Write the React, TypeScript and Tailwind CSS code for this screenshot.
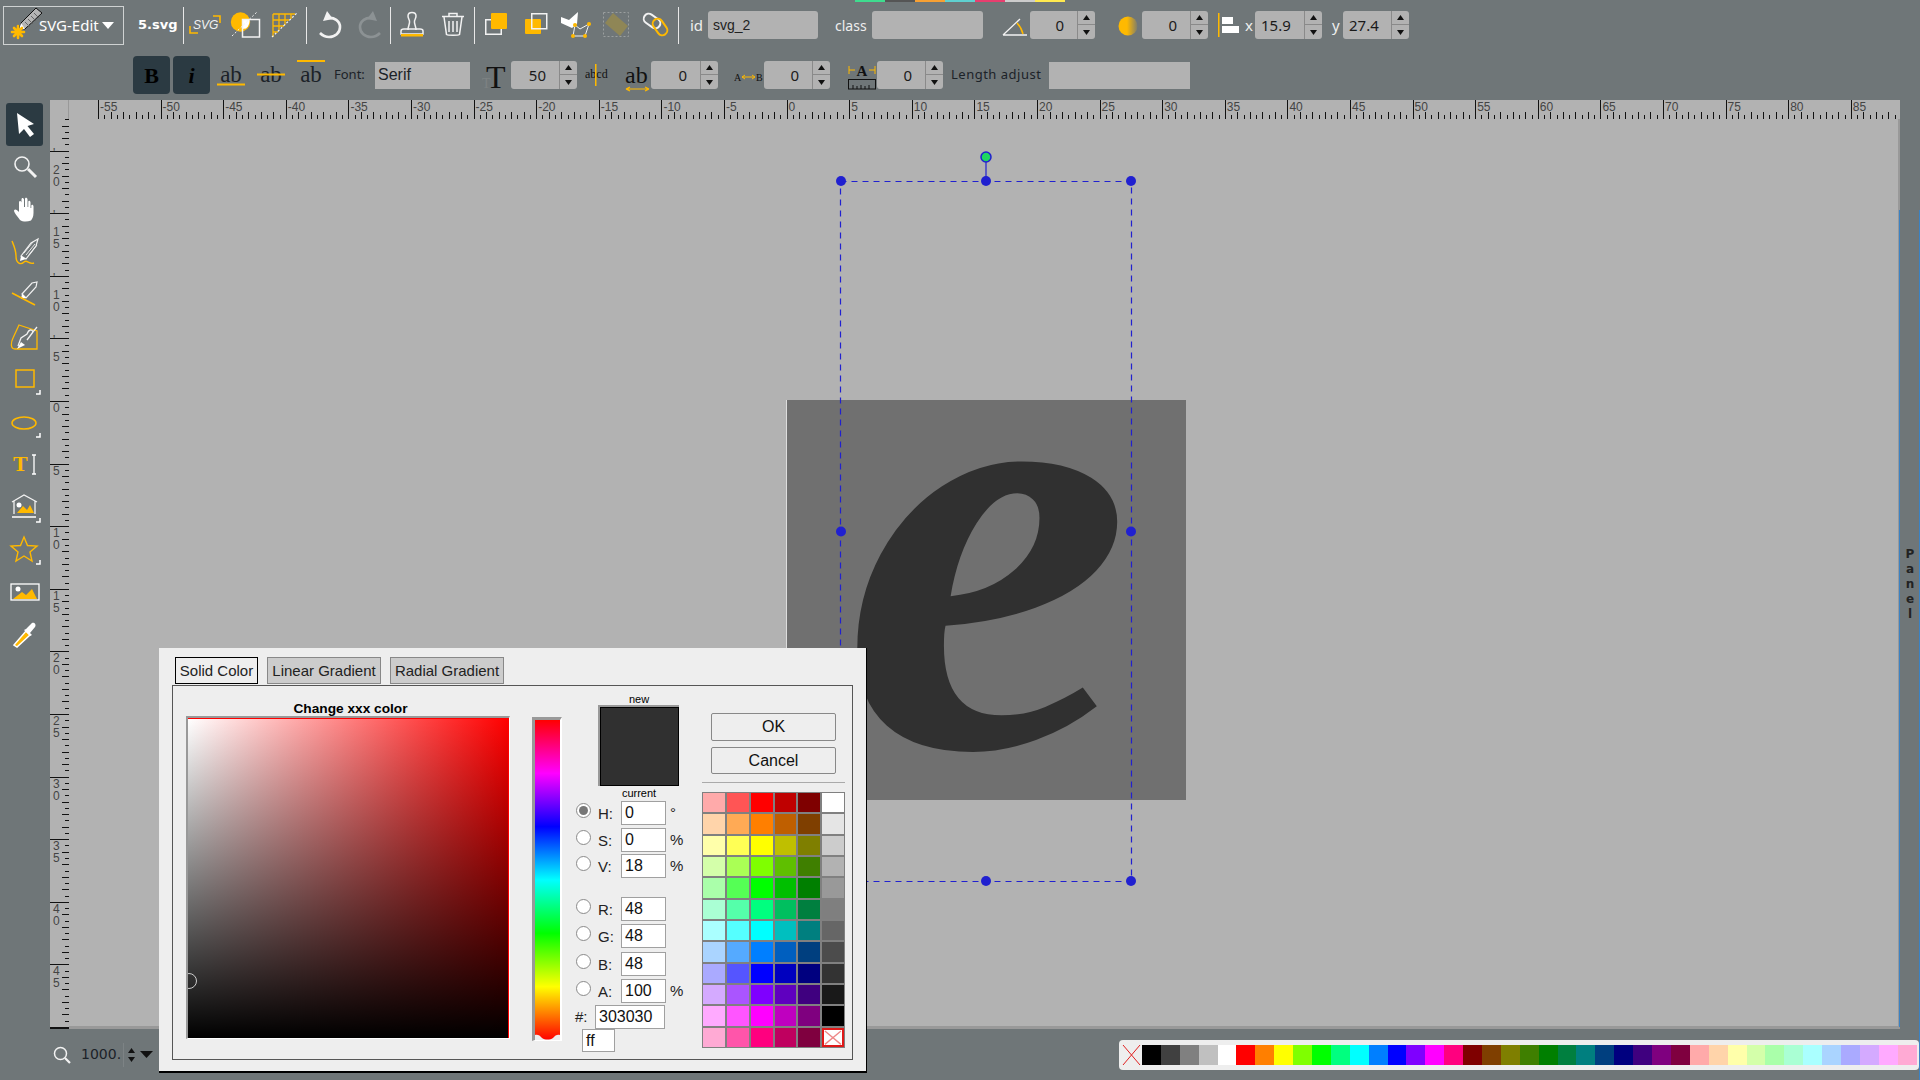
import React from "react"

const ORANGE = "#ffb900"
const WHITE = "#f2f2f2"

const topStrip = ["#3fdc8f", "#555555", "#f7a033", "#5fd0d0", "#e83e6f", "#cccccc", "#ffe94f"]

const swatches = [
  "#000000", "#404040", "#808080", "#c0c0c0", "#ffffff", "#ff0000", "#ff7f00", "#ffff00", "#7fff00", "#00ff00", "#00ff7f",
  "#00ffff", "#007fff", "#0000ff", "#7f00ff", "#ff00ff", "#ff007f", "#7f0000", "#7f3f00", "#7f7f00", "#3f7f00", "#007f00",
  "#007f3f", "#007f7f", "#003f7f", "#00007f", "#3f007f", "#7f007f", "#7f003f", "#ffaaaa", "#ffd4aa", "#ffffaa", "#d4ffaa",
  "#aaffaa", "#aaffd4", "#aaffff", "#aad4ff", "#aaaaff", "#d4aaff", "#ffaaff", "#ffaad4",
]

const quickColors = [
  "#ffaaaa", "#ff5555", "#ff0000", "#bf0000", "#7f0000", "#ffffff",
  "#ffd4aa", "#ffaa55", "#ff7f00", "#bf5f00", "#7f3f00", "#e5e5e5",
  "#ffffaa", "#ffff55", "#ffff00", "#bfbf00", "#7f7f00", "#cccccc",
  "#d4ffaa", "#aaff55", "#7fff00", "#5fbf00", "#3f7f00", "#b2b2b2",
  "#aaffaa", "#55ff55", "#00ff00", "#00bf00", "#007f00", "#999999",
  "#aaffd4", "#55ffaa", "#00ff7f", "#00bf5f", "#007f3f", "#7f7f7f",
  "#aaffff", "#55ffff", "#00ffff", "#00bfbf", "#007f7f", "#666666",
  "#aad4ff", "#55aaff", "#007fff", "#005fbf", "#003f7f", "#4c4c4c",
  "#aaaaff", "#5555ff", "#0000ff", "#0000bf", "#00007f", "#333333",
  "#d4aaff", "#aa55ff", "#7f00ff", "#5f00bf", "#3f007f", "#191919",
  "#ffaaff", "#ff55ff", "#ff00ff", "#bf00bf", "#7f007f", "#000000",
  "#ffaad4", "#ff55aa", "#ff007f", "#bf005f", "#7f003f",
]

function Spinner({ value, className, left }: { value: string; className: string; left?: boolean }) {
  return (
    <div className={`flex h-[28px] shrink-0 overflow-hidden rounded-[3px] bg-[#b2b2b2] text-[15px] text-[#1a1a1a] ${className}`}>
      <div className={`flex flex-1 items-center ${left ? "pl-[6px]" : "justify-end pr-[13px]"}`}>{value}</div>
      <div className="flex w-[18px] flex-col border-l border-[#8a8a8a]">
        <div className="flex h-[14px] items-center justify-center border-b border-[#8a8a8a]">
          <svg width="7" height="5" viewBox="0 0 7 5"><path d="M3.5 0 7 5H0Z" fill="#111" /></svg>
        </div>
        <div className="flex flex-1 items-center justify-center">
          <svg width="7" height="5" viewBox="0 0 7 5"><path d="M3.5 5 7 0H0Z" fill="#111" /></svg>
        </div>
      </div>
    </div>
  )
}

function Sep({ className }: { className: string }) {
  return <div className={`h-[37px] w-px shrink-0 bg-[#e8e8e8] ${className}`} />
}

function LogoIcon() {
  return (
    <svg width="36" height="37" viewBox="0 0 36 37" className="shrink-0">
      <path d="M29 1 35 6 18 22 12 23 14 16Z" fill="#b5b5b5" stroke="#111" strokeWidth="1" />
      <path d="M18 15 23 20M21 12 26 17M24 9 29 14M27 6 32 11" stroke="#666" strokeWidth="1" />
      <path d="M14 16 18 22 12 23Z" fill="#fff" />
      <g stroke={ORANGE} strokeWidth="2.6" strokeLinecap="round">
        <path d="M11 19V31M5 25H17M7 21 15 29M15 21 7 29" />
      </g>
    </svg>
  )
}

function SvgIcon({ className }: { className: string }) {
  return (
    <svg width="32" height="32" viewBox="0 0 32 32" className={className}>
      <text x="4" y="20" fontFamily="'Liberation Sans', sans-serif" fontStyle="italic" fontSize="12" fill={WHITE}>SVG</text>
      <path d="M24 7H31V14" fill="none" stroke={ORANGE} strokeWidth="1.6" />
      <path d="M1 17V24H9" fill="none" stroke={ORANGE} strokeWidth="1.6" />
    </svg>
  )
}

function ShapeIcon({ className }: { className: string }) {
  return (
    <svg width="32" height="32" viewBox="0 0 32 32" className={className}>
      <circle cx="11.5" cy="13" r="9.7" fill={ORANGE} />
      <path d="M13 10H20.5C21 13 20 17 17 19.5L13 20Z" fill="#fff" />
      <rect x="13.5" y="10.5" width="17" height="17.5" fill="none" stroke={WHITE} strokeWidth="1.5" />
      <path d="M3 27 28 3" stroke={WHITE} strokeWidth="1" strokeDasharray="2 2" />
    </svg>
  )
}

function GridIcon({ className }: { className: string }) {
  return (
    <svg width="32" height="32" viewBox="0 0 32 32" className={className}>
      <path d="M4 5H26M4 11H20M4 17H15M4 23H9M4 5V28M10 5V22M16 5V16M22 5V10" stroke={ORANGE} strokeWidth="1.3" fill="none" />
      <path d="M3 28 29 3" stroke={WHITE} strokeWidth="1.2" strokeDasharray="2 2" />
    </svg>
  )
}

function UndoIcon({ className, redo }: { className: string; redo?: boolean }) {
  const color = redo ? "#8c9294" : WHITE
  return (
    <svg width="32" height="32" viewBox="0 2 32 32" className={className} style={redo ? { transform: "scaleX(-1)" } : undefined}>
      <path d="M14 11C20 10 26 14 26 20 26 26 21 30 15 30 11 30 8 28 6 26" fill="none" stroke={color} strokeWidth="2.6" />
      <path d="M13 4 19 12 9 14Z" fill={color} />
    </svg>
  )
}

function StampIcon({ className }: { className: string }) {
  return (
    <svg width="32" height="32" viewBox="0 0 32 32" className={className}>
      <path d="M12 21C12 17 14 15 13.5 12 13 10 12 9 12 7 12 4.5 14 3.5 16 3.5S20 4.5 20 7C20 9 19 10 18.5 12 18 15 20 17 20 21" fill="none" stroke={WHITE} strokeWidth="1.5" />
      <path d="M5 22C5 21 6 20 8 20H24C26 20 27 21 27 22V25H5Z" fill="none" stroke={WHITE} strokeWidth="1.5" />
      <rect x="5" y="25" width="22" height="2.5" fill={ORANGE} />
    </svg>
  )
}

function TrashIcon({ className }: { className: string }) {
  return (
    <svg width="32" height="32" viewBox="-1 0 32 32" className={className} fill="none" stroke={WHITE} strokeWidth="1.5">
      <path d="M5 7.5H27M12 7V4.5H20V7M7 8 9.5 25.5C11 26.5 21 26.5 22.5 25.5L25 8" />
      <path d="M12 12V23M16 12V23M20 12V23" />
    </svg>
  )
}

function StackIcon({ className, front }: { className: string; front?: boolean }) {
  return (
    <svg width="32" height="32" viewBox="0 0 32 32" className={className}>
      {front ? (
        <>
          <rect x="5.75" y="10.75" width="15.5" height="14.5" fill="none" stroke={WHITE} strokeWidth="1.5" />
          <rect x="11" y="4" width="16" height="16" rx="1" fill={ORANGE} />
        </>
      ) : (
        <>
          <rect x="5" y="10" width="16" height="15" rx="1" fill={ORANGE} />
          <rect x="11.75" y="4.75" width="15" height="15" fill="none" stroke={WHITE} strokeWidth="1.5" />
        </>
      )}
    </svg>
  )
}

function PathIcon({ className }: { className: string }) {
  return (
    <svg width="32" height="32" viewBox="0 0 32 32" className={className}>
      <path d="M1 8 9 11 18 3 17 15 12 19 1 14Z" fill="#fff" />
      <path d="M15 16 20 20 29 15 25 27 13 27Z" fill="none" stroke={WHITE} strokeWidth="1" />
      <g fill={ORANGE}>
        <circle cx="15" cy="16" r="2" /><circle cx="29" cy="15" r="2" /><circle cx="25" cy="27" r="2" /><circle cx="13" cy="27" r="2" />
      </g>
    </svg>
  )
}

function GroupIcon({ className }: { className: string }) {
  return (
    <svg width="32" height="32" viewBox="0 0 32 32" className={className}>
      <rect x="3.5" y="3.5" width="25" height="24" fill="none" stroke="#9b9f9f" strokeDasharray="2 2" />
      <path d="M5 14 13 4 28 17 20 27Z" fill="#8f8656" />
    </svg>
  )
}

function LinkIcon({ className }: { className: string }) {
  return (
    <svg width="32" height="32" viewBox="0 0 32 32" className={className} fill="none" strokeWidth="2">
      <rect x="3" y="7" width="18" height="10" rx="5" transform="rotate(35 12 12)" stroke={WHITE} />
      <rect x="11" y="13" width="18" height="10" rx="5" transform="rotate(55 20 18)" stroke={ORANGE} />
    </svg>
  )
}

function AbIcon({ bar }: { bar: "under" | "strike" | "over" }) {
  const y = bar === "under" ? 27.5 : bar === "strike" ? 17.5 : 4
  return (
    <svg width="28" height="36" viewBox="0 0 28 36" className="-mx-px shrink-0">
      <text x="14" y="25" textAnchor="middle" fontFamily="'Liberation Serif', serif" fontSize="23" fill="#1c2228">ab</text>
      <rect x="0" y={y - 1} width="28" height="2" fill={ORANGE} />
    </svg>
  )
}

function AngleIcon() {
  return (
    <svg width="26" height="28" viewBox="0 0 26 28" className="ml-[19px] shrink-0">
      <path d="M1 24 18 8M1 24H25" stroke={WHITE} strokeWidth="1.3" fill="none" />
      <path d="M15 12C18 15 20 19 21 23" stroke={ORANGE} strokeWidth="1.5" fill="none" />
    </svg>
  )
}

function OpacityIcon() {
  return (
    <svg width="20" height="26" viewBox="0 0 20 26" className="ml-[23px] shrink-0">
      <defs>
        <linearGradient id="op" x1="0" x2="1" y1="0" y2="0">
          <stop offset="0.45" stopColor={ORANGE} />
          <stop offset="1" stopColor={ORANGE} stopOpacity="0.1" />
        </linearGradient>
      </defs>
      <circle cx="10" cy="14" r="9.5" fill="url(#op)" />
    </svg>
  )
}

function AlignIcon() {
  return (
    <svg width="23" height="32" viewBox="0 0 23 32" className="ml-[9px] shrink-0">
      <rect x="1" y="4" width="1.5" height="24" fill={ORANGE} />
      <rect x="5" y="8" width="11" height="7" fill="#fff" />
      <rect x="5" y="17" width="17" height="7" fill="#fff" />
    </svg>
  )
}

function FontSizeIcon() {
  return (
    <svg width="26" height="32" viewBox="0 0 26 32" className="ml-[12px] shrink-0 overflow-visible">
      <text x="0" y="29" fontFamily="'Liberation Serif', serif" fontSize="14" fill="#7d8283">T</text>
      <text x="4" y="29" fontFamily="'Liberation Serif', serif" fontSize="32" fill="#111">T</text>
    </svg>
  )
}

function BaselineIcon() {
  return (
    <svg width="23" height="30" viewBox="0 0 23 30" className="ml-[8px] shrink-0">
      <text x="0" y="18" fontFamily="'Liberation Serif', serif" fontSize="12" fill="#111">abcd</text>
      <rect x="10" y="4" width="1.5" height="22" fill={ORANGE} />
    </svg>
  )
}

function WordSpacingIcon() {
  return (
    <svg width="25" height="34" viewBox="0 0 25 34" className="ml-[17px] shrink-0">
      <text x="0" y="25" fontFamily="'Liberation Serif', serif" fontSize="24" fill="#111">ab</text>
      <path d="M1 31H24M1 31 5 29M1 31 5 33M24 31 20 29M24 31 20 33" stroke={ORANGE} strokeWidth="1.2" fill="none" />
    </svg>
  )
}

function LetterSpacingIcon() {
  return (
    <svg width="29" height="14" viewBox="0 0 29 14" className="ml-[16px] mt-[3px] shrink-0">
      <text x="0" y="11" fontFamily="'Liberation Serif', serif" fontSize="10" fill="#111">A</text>
      <text x="22" y="11" fontFamily="'Liberation Serif', serif" fontSize="10" fill="#111">B</text>
      <path d="M8 7H21M8 7 11 5M8 7 11 9M21 7 18 5M21 7 18 9" stroke={ORANGE} strokeWidth="1" fill="none" />
    </svg>
  )
}

function TextLengthIcon() {
  return (
    <svg width="28" height="30" viewBox="0 0 28 30" className="ml-[18px] shrink-0">
      <text x="14" y="16" textAnchor="middle" fontFamily="'Liberation Serif', serif" fontWeight="700" fontSize="15" fill="#111">A</text>
      <path d="M1 10H7M21 10H27M1 6V14M27 6V14" stroke={ORANGE} strokeWidth="1" fill="none" />
      <rect x="0.5" y="19.5" width="27" height="9.5" fill="none" stroke="#111" />
      <path d="M5 29V25M9 29V26M13 29V25M17 29V26M21 29V25" stroke="#111" strokeWidth="1" />
    </svg>
  )
}

function ToolIcon({ name }: { name: string }) {
  const o = ORANGE
  const w = WHITE
  const corner = <path d="M31 27V31H27" fill="none" stroke="#fff" strokeWidth="1.5" />
  switch (name) {
    case "select":
      return <svg width="32" height="32" viewBox="0 0 32 32"><path d="M8 5 25 16 18.5 18 25 26 21 29 15 21 10 26Z" fill="#fff" /></svg>
    case "zoom":
      return (
        <svg width="32" height="32" viewBox="0 0 32 32" fill="none" stroke={w}>
          <circle cx="13" cy="13" r="7" strokeWidth="1.6" />
          <path d="M19 18 27 26" strokeWidth="3" />
        </svg>
      )
    case "hand":
      return (
        <svg width="32" height="32" viewBox="0 0 32 32">
          <path d="M11 27C9 24 5 20 5 17.5 6 15.5 8 17 10 19V9.5C10 7.5 12 7.5 12.5 9.5V6.5C12.5 4.5 14.5 4.5 15 6.5V14H16V6C16 4 18.5 4.5 18.5 6.5V14H19.3V8.5C19.5 7 21.5 7.5 21.5 9.5V15H22.3V12.5C22.5 11 24.5 11.5 24.5 13.5V20C24.5 24 23 26 22 27.5 18 29 14 29 11 27Z" fill="#fff" />
        </svg>
      )
    case "path":
      return (
        <svg width="32" height="32" viewBox="0 0 32 32" fill="none">
          <path d="M12 20 22 7 29 3 27 10 17 23Z" stroke={w} strokeWidth="1.2" />
          <path d="M15 17 24 6M17 19 26 8M20 19 28 9" stroke={w} strokeWidth="0.9" />
          <path d="M12 20 11 25 17 23Z" fill="#fff" />
          <path d="M3 5C5 10 7 14 7 20 7 28 12 29 15 26 18 23 20 29 25 27" stroke={o} strokeWidth="1.4" />
        </svg>
      )
    case "line":
      return (
        <svg width="32" height="32" viewBox="0 0 32 32" fill="none">
          <path d="M13 16 23 5 28 4 27 9 17 20Z" stroke={w} strokeWidth="1.2" />
          <path d="M13 16 12 21 17 20Z" fill="#fff" />
          <path d="M3 15 26 27" stroke={o} strokeWidth="1.6" />
        </svg>
      )
    case "pen":
      return (
        <svg width="32" height="32" viewBox="0 0 32 32" fill="none">
          <path d="M10 4 28 10V28H6C1 28 2 21 4 17Z" stroke={o} strokeWidth="1.3" />
          <path d="M9 25 12 17 18 13C20 8 23 8 24 11L28 6M24 11 18 19Z" stroke={w} strokeWidth="1.3" />
          <path d="M8 28 12 21 16 24Z" fill="#fff" />
        </svg>
      )
    case "rect":
      return <svg width="32" height="32" viewBox="0 0 32 32" fill="none"><rect x="7" y="7" width="18" height="17" stroke={o} strokeWidth="1.5" />{corner}</svg>
    case "ellipse":
      return <svg width="32" height="32" viewBox="0 0 32 32" fill="none"><ellipse cx="15" cy="17" rx="12" ry="6" stroke={o} strokeWidth="1.5" />{corner}</svg>
    case "text":
      return (
        <svg width="32" height="32" viewBox="0 0 32 32">
          <text x="4" y="23" fontFamily="'Liberation Serif', serif" fontWeight="700" fontSize="22" fill={o}>T</text>
          <path d="M23 7H27M23 26H27M25 7V26" stroke="#fff" strokeWidth="1.3" fill="none" />
        </svg>
      )
    case "library":
      return (
        <svg width="32" height="32" viewBox="0 0 32 32" fill="none">
          <path d="M3 11 15 4 28 11M5 10V23M26 10V23" stroke={w} strokeWidth="1.3" />
          <path d="M8 22 14 15 18 19 21 14 25 22Z" fill={o} />
          <circle cx="10" cy="14" r="2.5" fill="#fff" />
          <path d="M3 26H27" stroke="#ddd" strokeWidth="2" />
          {corner}
        </svg>
      )
    case "star":
      return (
        <svg width="32" height="32" viewBox="0 0 32 32" fill="none">
          <path d="M15 4 18.5 12.5 28 13 21 19 23 28 15 23 7 28 9 19 2 13 11.5 12.5Z" stroke={o} strokeWidth="1.4" />
          {corner}
        </svg>
      )
    case "image":
      return (
        <svg width="32" height="32" viewBox="0 1 32 32">
          <rect x="2" y="9" width="28" height="16" fill="none" stroke="#fff" strokeWidth="1.3" />
          <path d="M4 24 13 17 17 20 23 14 28 24Z" fill={o} />
          <circle cx="9" cy="14" r="2.5" fill="#fff" />
        </svg>
      )
    default:
      return (
        <svg width="32" height="32" viewBox="0 0 32 32" fill="none">
          <path d="M5 27 17 13 21 17 8 29Z" fill={o} stroke="#fff" strokeWidth="1.5" />
          <path d="M17 11 22 6C24 3 28 6 26 9L21 15 23 17 21 18 15 12Z" fill="#fff" />
        </svg>
      )
  }
}

const tools = ["select", "zoom", "hand", "path", "line", "pen", "rect", "ellipse", "text", "library", "star", "image", "dropper"]

const RULER_FONT = "'Liberation Sans', sans-serif"
const STEP = 6.26

function HorizontalRuler() {
  const ticks = []
  for (let i = 0; i < 290; i++) {
    const unit = -55 + i / 2
    const x = 29 + i * STEP
    if (x > 1831) break
    const major = i % 10 === 0
    ticks.push(
      <g key={i}>
        <rect x={Math.round(x)} y={major ? 0 : i % 2 === 0 ? 12 : 15} width="1" height={major ? 19 : i % 2 === 0 ? 7 : 4} fill="#111" />
        {major && <text x={x + 2} y="11" fontFamily={RULER_FONT} fontSize="12" fill="#444">{unit}</text>}
      </g>,
    )
  }
  return <svg width="1831" height="19" className="block">{ticks}</svg>
}

function VerticalRuler() {
  const ticks = []
  for (let i = 0; i < 160; i++) {
    const y = -31 + i * STEP
    if (y > 909) break
    const major = i % 10 === 0
    const unit = -25 + i / 2
    ticks.push(
      <g key={i}>
        <rect x={major ? 0 : i % 2 === 0 ? 12 : 15} y={Math.round(y)} width={major ? 19 : i % 2 === 0 ? 7 : 4} height="1" fill="#111" />
        {major && y > 0 && y < 880 &&
          String(unit)
            .split("")
            .map((ch, n) => (
              <text key={n} x="3" y={y + (ch === "-" ? 6 : 11 + n * 12)} fontFamily={RULER_FONT} fontSize="12" fill="#444">
                {ch === "-" ? "'" : ch}
              </text>
            ))}
      </g>,
    )
  }
  return <svg width="19" height="909" className="block">{ticks}</svg>
}

function Selection() {
  const handles = [
    [772, 62], [917, 62], [1062, 62], [772, 412.5], [1062, 412.5], [917, 762], [1062, 762],
  ]
  return (
    <svg width="1200" height="800" className="absolute left-0 top-0">
      <rect x="771.5" y="62.5" width="291" height="700" fill="none" stroke="#2020d0" strokeWidth="1.2" strokeDasharray="6 5" />
      <path d="M917 38V62" stroke="#2020d0" strokeWidth="1.2" />
      {handles.map(([x, y]) => (
        <circle key={`${x}-${y}`} cx={x} cy={y} r="5" fill="#2020d0" />
      ))}
      <circle cx="917" cy="38" r="5" fill="#1ed760" stroke="#2020d0" strokeWidth="1.5" />
    </svg>
  )
}

function ValueRow({ label, value, unit, className, checked }: { label: string; value: string; unit?: string; className: string; checked?: boolean }) {
  return (
    <div className={`flex h-[24px] items-center ${className}`}>
      <div className="-mt-[5px] ml-px flex h-[15px] w-[15px] items-center justify-center rounded-full border border-[#8a8a8a] bg-white">
        {checked && <div className="h-[9px] w-[9px] rounded-full bg-[#777]" />}
      </div>
      <div className="ml-[7px] mt-[2px] w-[23px] text-[15px] text-[#222]">{label}</div>
      <div className="flex h-full w-[45px] items-center border border-[#a0a0a0] bg-white pl-[3px] text-[16px] text-[#111]">{value}</div>
      {unit && <div className="ml-[4px] text-[15px] text-[#222]">{unit}</div>}
    </div>
  )
}

function ColorDialog() {
  return (
    <div className="absolute left-[159px] top-[648px] h-[425px] w-[708px] border-b-2 border-r border-b-black border-r-black bg-[#eeeeee] font-['Liberation_Sans',sans-serif]">
      <div className="ml-[16px] flex gap-[9px] pt-[9px] text-[15px] leading-[25px] text-[#222]">
        <div className="h-[27px] w-[83px] border border-black bg-[#eeeeee] text-center">Solid Color</div>
        <div className="h-[27px] w-[114px] border border-[#888] bg-[#cccccc] text-center">Linear Gradient</div>
        <div className="h-[27px] w-[114px] border border-[#888] bg-[#cccccc] text-center">Radial Gradient</div>
      </div>
      <div className="ml-[13px] mt-px flex h-[375px] w-[681px] border border-[#555]">
        <div className="ml-[13px] w-[324px]">
          <div className="mt-[15px] h-[15px] pl-[5px] text-center text-[13.7px] font-bold leading-[15px] text-black">Change xxx color</div>
          <div className="h-[323px] w-[324px] border-b border-l-2 border-r border-t-2 border-b-white border-l-[#999] border-r-white border-t-[#999]">
            <div className="relative h-full w-full overflow-hidden border-r border-t border-[#f00] bg-[linear-gradient(to_bottom,rgba(0,0,0,0),#000),linear-gradient(to_right,#fff,#f00)]">
              <div className="absolute left-[-7px] top-[254px] h-[16px] w-[16px] rounded-full border-[1.5px] border-[#ccc]" />
            </div>
          </div>
        </div>
        <div className="ml-[22px] mt-[31px] h-[324px] w-[30px] border-b border-l-[3px] border-r-[2px] border-t-[3px] border-b-white border-l-[#999] border-r-white border-t-[#999]">
          <div className="relative h-full w-full overflow-hidden bg-[linear-gradient(to_bottom,#f00,#f0f_16.67%,#00f_33.33%,#0ff_50%,#0f0_66.67%,#ff0_83.33%,#f00)]">
            <svg width="25" height="6" viewBox="0 0 25 6" className="absolute bottom-0 left-0">
              <path d="M0 6V1C2 0 5 1 7 4 10 6 15 6 18 4 20 1 23 0 25 1V6Z" fill="#eee" />
            </svg>
          </div>
        </div>
        <div className="ml-[13px] w-[115px] text-[#222]">
          <div className="mt-[7px] h-[12px] w-[128px] text-center text-[11px] leading-[12px] text-black">new</div>
          <div className="ml-[23px] h-[81px] w-[81px] border-l-2 border-t-2 border-[#999]">
            <div className="h-[79px] w-[79px] border border-black bg-[#303030]" />
          </div>
          <div className="h-[15px] w-[128px] text-center text-[11px] leading-[14px] text-black">current</div>
          <ValueRow label="H:" value="0" unit="°" checked className="" />
          <ValueRow label="S:" value="0" unit="%" className="mt-[3px]" />
          <ValueRow label="V:" value="18" unit="%" className="mt-[2px]" />
          <ValueRow label="R:" value="48" className="mt-[19px]" />
          <ValueRow label="G:" value="48" className="mt-[3px]" />
          <ValueRow label="B:" value="48" className="mt-[4px]" />
          <ValueRow label="A:" value="100" unit="%" className="mt-[3px]" />
          <div className="mt-[2px] flex h-[24px] items-center">
            <div className="w-[20px] text-[15px]">#:</div>
            <div className="flex h-full w-[70px] items-center border border-[#a0a0a0] bg-white pl-[3px] text-[16px] text-[#111]">303030</div>
          </div>
          <div className="ml-[7px] flex h-[23px] w-[33px] items-center border border-[#a0a0a0] bg-white pl-[3px] text-[16px] text-[#111]">ff</div>
        </div>
        <div className="ml-[12px] w-[143px]">
          <div className="ml-[9px] mt-[27px] flex h-[28px] w-[125px] items-center justify-center rounded-[2px] border border-[#888] text-[16px] text-[#111]">OK</div>
          <div className="ml-[9px] mt-[6px] flex h-[27px] w-[125px] items-center justify-center rounded-[2px] border border-[#888] text-[16px] text-[#111]">Cancel</div>
          <div className="mt-[8px] h-px bg-[#aaa]" />
          <div className="mt-[9px] grid h-[256px] w-[143px] grid-cols-6 grid-rows-12 gap-[2px] border border-[#808080] bg-[#808080]">
            {quickColors.map((c, i) => (
              <div key={i} style={{ backgroundColor: c }} />
            ))}
            <div className="border-2 border-[#e01818] bg-white">
              <svg viewBox="0 0 20 16" preserveAspectRatio="none" className="h-full w-full">
                <path d="M1 1 19 15M19 1 1 15" stroke="#e88" strokeWidth="1.5" />
              </svg>
            </div>
          </div>
        </div>
      </div>
    </div>
  )
}

export default function App() {
  return (
    <div className="relative flex h-[1080px] w-[1920px] flex-col overflow-hidden bg-[#6f7678] font-['Noto_Sans',sans-serif] text-[#eee]">
      {/* colour strip at the very top */}
      <div className="absolute left-[855px] top-0 flex h-[2px]">
        {topStrip.map((c) => (
          <div key={c} className="w-[30px]" style={{ backgroundColor: c }} />
        ))}
      </div>

      {/* Toolbar row 1 */}
      <div className="flex h-[50px] items-center">
        <div className="ml-[3px] flex h-[39px] w-[121px] shrink-0 items-center border border-[#cfd2d2] pl-[3px] text-[15px] text-white">
          <LogoIcon />
          <span className="-ml-[4px]">SVG-Edit</span>
          <svg width="12" height="7" viewBox="0 0 12 7" className="ml-[3px]"><path d="M0 0H12L6 7Z" fill="#fff" /></svg>
        </div>
        <div className="ml-[14px] w-[39px] shrink-0 font-['DejaVu_Sans',sans-serif] text-[13px] font-bold text-white">5.svg</div>
        <Sep className="ml-[6px]" />
        <SvgIcon className="ml-[5px] shrink-0" />
        <ShapeIcon className="ml-[8px] shrink-0" />
        <GridIcon className="ml-[8px] shrink-0" />
        <Sep className="ml-[5px]" />
        <UndoIcon className="ml-[7px] shrink-0" />
        <UndoIcon redo className="ml-[8px] shrink-0" />
        <Sep className="ml-[4px]" />
        <StampIcon className="ml-[5px] shrink-0" />
        <TrashIcon className="ml-[8px] shrink-0" />
        <Sep className="ml-[6px]" />
        <StackIcon front className="ml-[5px] shrink-0" />
        <StackIcon className="ml-[8px] shrink-0" />
        <PathIcon className="ml-[8px] shrink-0" />
        <GroupIcon className="ml-[8px] shrink-0" />
        <LinkIcon className="ml-[8px] shrink-0" />
        <Sep className="ml-[6px]" />
        <div className="ml-[11px] w-[14px] shrink-0 text-[15px]">id</div>
        <div className="ml-[4px] flex h-[28px] w-[110px] shrink-0 items-center rounded-[3px] bg-[#b2b2b2] pl-[5px] font-['Liberation_Sans',sans-serif] text-[14px] text-[#222]">svg_2</div>
        <div className="ml-[17px] w-[33px] shrink-0 text-[14px]">class</div>
        <div className="ml-[4px] h-[28px] w-[111px] shrink-0 rounded-[3px] bg-[#b2b2b2]" />
        <AngleIcon />
        <Spinner value="0" className="ml-[2px] w-[65px]" />
        <OpacityIcon />
        <Spinner value="0" className="ml-[4px] w-[66px]" />
        <AlignIcon />
        <div className="ml-[5px] w-[10px] shrink-0 text-[15px]">x</div>
        <Spinner value="15.9" left className="w-[67px]" />
        <div className="ml-[10px] w-[10px] shrink-0 text-[15px]">y</div>
        <Spinner value="27.4" left className="ml-[1px] w-[66px]" />
      </div>

      {/* Toolbar row 2 */}
      <div className="flex h-[50px] items-center text-[#1c2228]">
        <div className="ml-[133px] flex h-[38px] w-[37px] shrink-0 items-center justify-center rounded-[4px] bg-[#2b3a42] font-['Liberation_Serif',serif] text-[22px] font-bold text-black">B</div>
        <div className="ml-[3px] flex h-[38px] w-[37px] shrink-0 items-center justify-center rounded-[4px] bg-[#2b3a42] font-['Liberation_Serif',serif] text-[22px] font-bold italic text-black">i</div>
        <div className="ml-[8px] w-[26px] shrink-0"><AbIcon bar="under" /></div>
        <div className="ml-[14px] w-[26px] shrink-0"><AbIcon bar="strike" /></div>
        <div className="ml-[14px] w-[26px] shrink-0"><AbIcon bar="over" /></div>
        <div className="ml-[10px] w-[34px] shrink-0 text-[13px]">Font:</div>
        <div className="ml-[7px] flex h-[27px] w-[95px] shrink-0 items-center bg-[#b2b2b2] pl-[3px] font-['Liberation_Sans',sans-serif] text-[16px]">Serif</div>
        <FontSizeIcon />
        <Spinner value="50" className="ml-[3px] w-[66px]" />
        <BaselineIcon />
        <WordSpacingIcon />
        <Spinner value="0" className="ml-px w-[67px]" />
        <LetterSpacingIcon />
        <Spinner value="0" className="ml-px w-[66px]" />
        <TextLengthIcon />
        <Spinner value="0" className="ml-px w-[66px]" />
        <div className="ml-[8px] w-[93px] shrink-0 whitespace-nowrap text-[13px] tracking-[0.5px]">Length adjust</div>
        <div className="ml-[5px] h-[27px] w-[141px] shrink-0 bg-[#b2b2b2]" />
      </div>

      {/* Main area */}
      <div className="flex h-[929px]">
        <div className="flex w-[50px] flex-col items-start pl-[6px] pt-[3px]">
          {tools.map((t, i) => (
            <div key={t} className={`flex h-[42.5px] w-[37px] items-center justify-center rounded-[3px] ${i === 0 ? "bg-[#2b3a42]" : ""}`}>
              <ToolIcon name={t} />
            </div>
          ))}
        </div>
        <div className="flex w-[1850px] flex-col">
          <div className="flex h-[19px] bg-[#b2b2b2]">
            <div className="w-[19px] border-r border-[#999]" />
            <HorizontalRuler />
          </div>
          <div className="flex h-[910px]">
            <div className="w-[19px] overflow-hidden border-b border-[#111] bg-[#b2b2b2]">
              <VerticalRuler />
            </div>
            <div className="relative w-[1831px] overflow-hidden border-b-[3px] border-r-[2px] border-b-[#999] border-r-[#999] bg-[#b2b2b2]">
              {/* drawing on the svg canvas */}
              <div className="absolute left-[717px] top-[281px] h-[400px] w-[400px] border-l border-[#ddd] bg-[#707070]" />
              <div className="absolute left-[773px] top-[122px] origin-left scale-x-[1.08] font-['Liberation_Serif',serif] text-[604px] font-bold italic leading-none text-[#303030]">e</div>
              <Selection />
            </div>
          </div>
        </div>
        <div className="flex w-[20px] flex-col items-center pt-[447px] font-['DejaVu_Sans',sans-serif] text-[12px] font-bold leading-[15px] text-[#222]">
          {"Panel".split("").map((c, i) => (
            <span key={i}>{c}</span>
          ))}
        </div>
      </div>

      {/* Bottom bar */}
      <div className="flex h-[51px] items-center">
        <svg width="18" height="18" viewBox="0 0 18 18" className="ml-[53px] shrink-0" fill="none" stroke={WHITE}>
          <circle cx="7.5" cy="7.5" r="6" strokeWidth="1.5" />
          <path d="M12 12 17 17" strokeWidth="2.2" />
        </svg>
        <div className="ml-[10px] w-[38px] font-['DejaVu_Sans',sans-serif] text-[14px] text-[#1c2228]">1000.</div>
        <div className="ml-[4px] flex h-[24px] w-[12px] flex-col items-center justify-center gap-[4px] border-l border-[#7d8385] pl-[4px]">
          <svg width="7" height="5" viewBox="0 0 7 5"><path d="M3.5 0 7 5H0Z" fill="#111" /></svg>
          <svg width="7" height="5" viewBox="0 0 7 5"><path d="M3.5 5 7 0H0Z" fill="#111" /></svg>
        </div>
        <svg width="13" height="7" viewBox="0 0 13 7" className="ml-[5px]"><path d="M0 0H13L6.5 7Z" fill="#111" /></svg>
        <div className="ml-auto mr-[1px] flex h-[30px] w-[800px] items-center rounded-[4px] bg-[#eeeeee] py-[5px]">
          <svg width="23" height="20" viewBox="0 0 23 20" className="shrink-0">
            <path d="M4 0 21 20M21 0 4 20" stroke="#e02020" strokeWidth="1" />
          </svg>
          <div className="flex h-full">
            {swatches.map((c) => (
              <div key={c} className="h-full w-[18.9px]" style={{ backgroundColor: c }} />
            ))}
          </div>
        </div>
      </div>

      <div className="absolute left-[1899px] top-[210px] h-[817px] w-px bg-[#3b82c4]" />
      <div className="absolute left-[1919px] top-[210px] h-[870px] w-px bg-[#3b82c4]" />
      <ColorDialog />
    </div>
  )
}
